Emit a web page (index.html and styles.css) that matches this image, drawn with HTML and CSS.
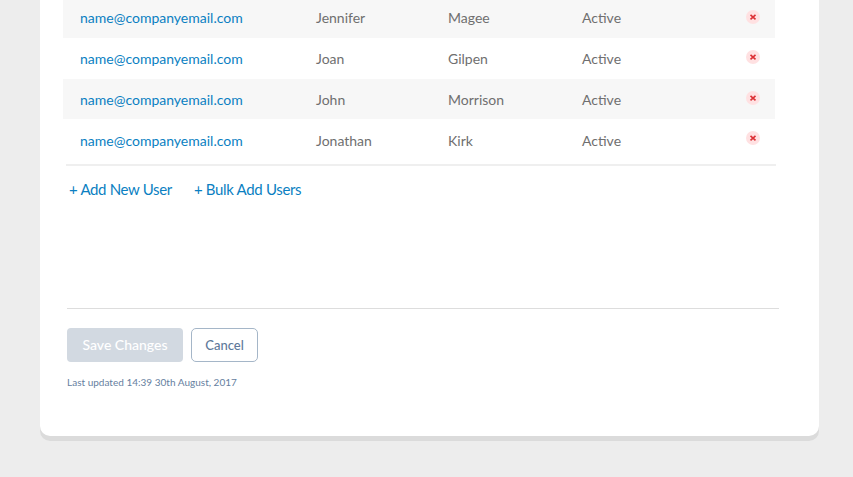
FILE: index.html
```html
<!DOCTYPE html>
<html lang="en">
<head>
<meta charset="utf-8">
<title>Users</title>
<link rel="stylesheet" href="styles.css">
</head>
<body>
<main class="panel">
  <div class="users">
    <div class="row"><a class="email">name@companyemail.com</a><span>Jennifer</span><span>Magee</span><span>Active</span><svg class="remove" viewBox="0 0 14 14"><circle cx="7" cy="7" r="7"/><path d="M4.5 4.8l5 4.6M9.5 4.8l-5 4.6"/></svg></div>
    <div class="row"><a class="email">name@companyemail.com</a><span>Joan</span><span>Gilpen</span><span>Active</span><svg class="remove" viewBox="0 0 14 14"><circle cx="7" cy="7" r="7"/><path d="M4.5 4.8l5 4.6M9.5 4.8l-5 4.6"/></svg></div>
    <div class="row"><a class="email">name@companyemail.com</a><span>John</span><span>Morrison</span><span>Active</span><svg class="remove" viewBox="0 0 14 14"><circle cx="7" cy="7" r="7"/><path d="M4.5 4.8l5 4.6M9.5 4.8l-5 4.6"/></svg></div>
    <div class="row"><a class="email">name@companyemail.com</a><span>Jonathan</span><span>Kirk</span><span>Active</span><svg class="remove" viewBox="0 0 14 14"><circle cx="7" cy="7" r="7"/><path d="M4.5 4.8l5 4.6M9.5 4.8l-5 4.6"/></svg></div>
  </div>
  <nav class="add-links"><a>+ Add New User</a><a>+ Bulk Add Users</a></nav>
  <footer class="actions">
    <div class="buttons"><button class="save">Save Changes</button><button class="cancel">Cancel</button></div>
    <p class="updated">Last updated 14:39 30th August, 2017</p>
  </footer>
</main>
</body>
</html>
```
FILE: styles.css
```css
* { box-sizing: border-box; }
body { margin: 0; height: 477px; overflow: hidden; background: #ededed; font-family: Lato, sans-serif; }
.panel { width: 779px; height: 436px; margin-left: 40px; background: #fff; border-radius: 0 0 10px 10px; box-shadow: 0 5px 0 #dbdbdb; }
.users { width: 712px; margin-left: 23px; }
.row { display: grid; grid-template-columns: 236px 132px 134px 164px 14px; align-items: start; height: 40px; padding: 11px 0 0 17px; font-size: 14px; line-height: 20px; color: #6f6f6f; }
.row:first-child { height: 38px; padding-top: 8px; }
.row:nth-child(2) { height: 41px; }
.row:nth-child(odd) { background: #f7f7f7; }
.row:nth-child(4) { height: 45px; padding-top: 12px; }
.email { color: #0b7fc2; }
.remove { display: block; width: 14px; height: 14px; margin-top: 1px; }
.row:first-child .remove { margin-top: 2px; }
.row:nth-child(4) .remove { margin-top: 0; }
.remove circle { fill: #ffe1e2; }
.remove path { stroke: #dc3035; stroke-width: 1.6; fill: none; }
.add-links { display: flex; gap: 22px; width: 710px; margin-left: 26px; padding: 13px 3px 0; height: 144px; border-top: 2px solid #efefef; font-size: 15px; line-height: 20px; letter-spacing: -0.33px; color: #0b7fc2; }
.actions { width: 712px; margin-left: 27px; padding-top: 19px; border-top: 1px solid #ddd; }
.buttons { display: flex; gap: 8px; }
.buttons button { height: 34px; padding: 0 0 1px; border-radius: 4px; font: 500 14px Lato, sans-serif; }
.buttons .save { width: 116px; border: 0; padding-bottom: 2px; background: #d2d9e1; color: #fff; }
.buttons .cancel { width: 67px; border: 1px solid #a5b6c8; border-radius: 5px; background: #fff; color: #60799a; font-size: 13px; }
.updated { margin: 13px 0 0; font-size: 10px; line-height: 14px; letter-spacing: 0.01px; color: #6680a0; }
```
